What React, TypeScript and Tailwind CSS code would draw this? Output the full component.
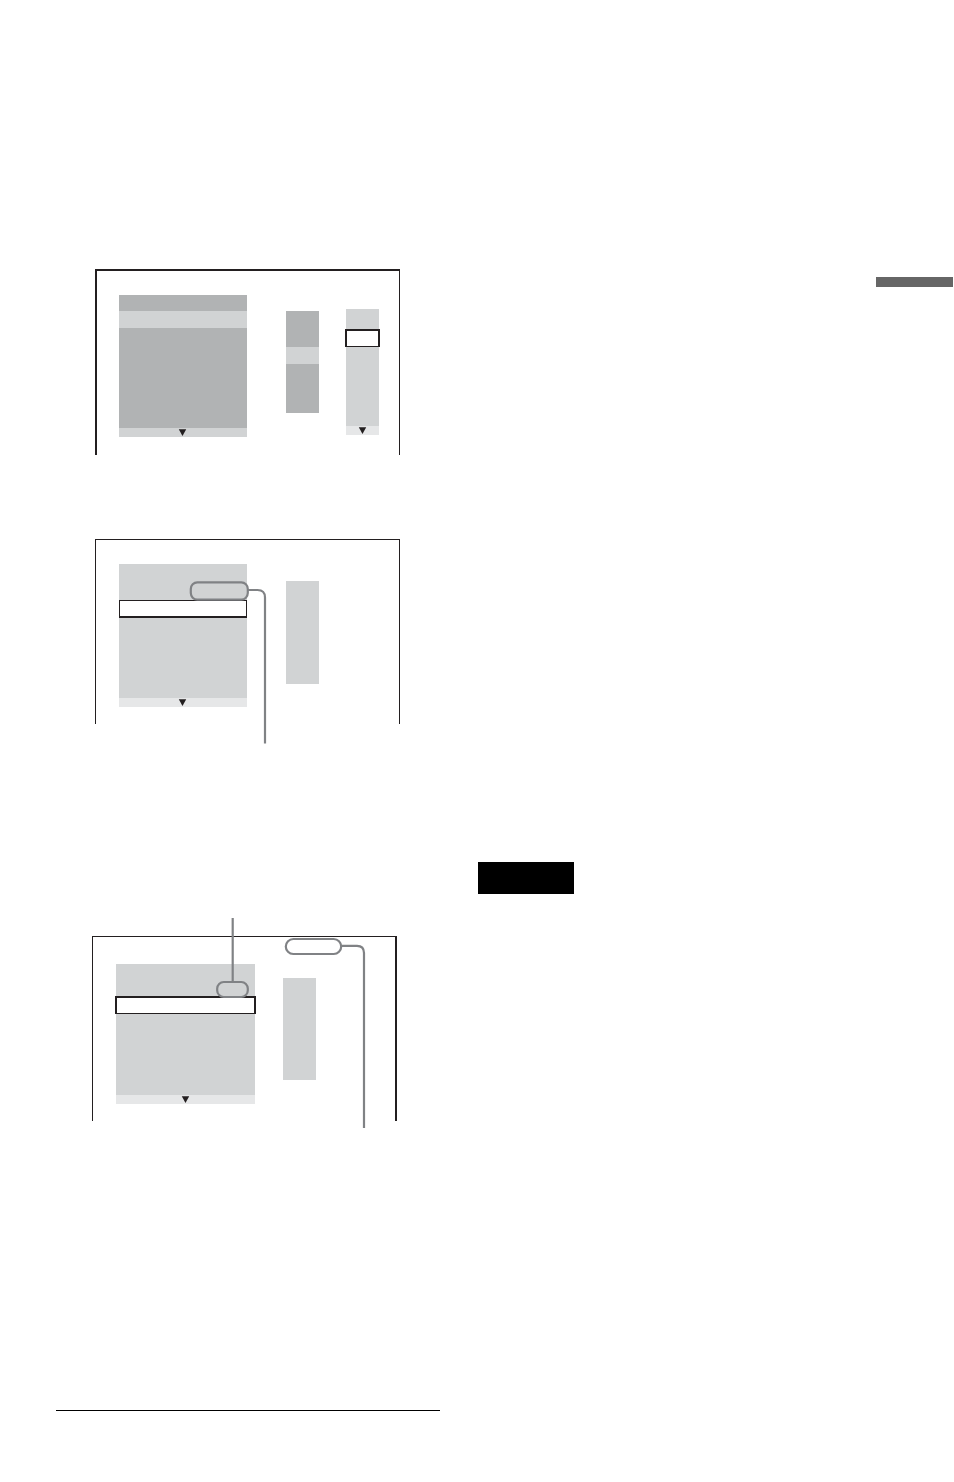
import type { ReactNode } from 'react';
import clsx from 'clsx';

interface RowProps {
  className: string;
}

const Row = ({ className }: RowProps) => {
  return <div className={className} />;
};

const ScrollFooter = ({ className }: { className: string }) => {
  return (
    <div className={clsx('flex h-[9px] items-center justify-center', className)}>
      <svg className="overflow-visible" width="7" height="7" viewBox="0 0 7 7" aria-hidden="true">
        <path d="M-0.2 0.3H7.2L3.5 7Z" fill="#231f20" />
      </svg>
    </div>
  );
};

const Screen = ({ className, children }: { className: string; children: ReactNode }) => {
  return (
    <figure className={clsx('relative flex w-[305px] items-start border-[#231f20]', className)}>
      {children}
    </figure>
  );
};

const SelectionScreen = () => {
  return (
    <Screen className="ml-[39px] border-t-2 border-r border-l-2 pt-6 pb-[18px] pl-[22px]">
      <div className="w-32">
        <Row className="h-4 bg-[#b1b3b4]" />
        <Row className="h-[17px] bg-[#d1d3d4]" />
        <Row className="h-[100px] bg-[#b1b3b4]" />
        <ScrollFooter className="bg-[#d1d3d4] pr-px" />
      </div>
      <div className="mt-4 ml-[39px] w-[33px]">
        <Row className="h-9 bg-[#b1b3b4]" />
        <Row className="h-[17px] bg-[#d1d3d4]" />
        <Row className="h-[49px] bg-[#b1b3b4]" />
      </div>
      <div className="mt-[14px] ml-[27px] w-[33px]">
        <Row className="h-5 bg-[#d1d3d4]" />
        <Row className="-mx-px h-[18px] border-2 border-b border-[#231f20] bg-white" />
        <Row className="h-[79px] bg-[#d1d3d4]" />
        <ScrollFooter className="bg-[#e6e7e8]" />
      </div>
    </Screen>
  );
};

const ListScreen = () => {
  return (
    <Screen className="mt-[84px] ml-[39px] border-x border-t pt-6 pb-[17px] pl-[23px]">
      <div className="w-32">
        <Row className="h-9 bg-[#d1d3d4]" />
        <Row className="h-[18px] border border-b-2 border-[#231f20] bg-white" />
        <Row className="h-20 bg-[#d1d3d4]" />
        <ScrollFooter className="bg-[#e6e7e8] pr-px" />
      </div>
      <Row className="mt-[17px] ml-[39px] h-[103px] w-[33px] bg-[#d1d3d4]" />
      <svg
        className="absolute top-10 left-[92px]"
        width="80"
        height="164"
        viewBox="0 0 80 164"
        fill="none"
        stroke="#808285"
        strokeWidth="2.2"
        aria-hidden="true"
      >
        <rect x="2.8" y="2.4" width="57" height="17.2" rx="6.5" />
        <path d="M60 10H69.5Q77 10 77 17.5V163.5" />
      </svg>
    </Screen>
  );
};

const DetailScreen = () => {
  return (
    <Screen className="mt-[212px] ml-9 border-t border-r-2 border-l pt-[27px] pb-[17px] pl-[23px]">
      <div className="w-[139px]">
        <Row className="h-8 bg-[#d1d3d4]" />
        <Row className="-mx-px h-[18px] border-2 border-b border-[#231f20] bg-white" />
        <Row className="h-[81px] bg-[#d1d3d4]" />
        <ScrollFooter className="bg-[#e6e7e8]" />
      </div>
      <Row className="mt-[14px] ml-7 h-[102px] w-[33px] bg-[#d1d3d4]" />
      <svg
        className="absolute -top-[19px] left-[121px]"
        width="154"
        height="210"
        viewBox="0 0 154 210"
        fill="none"
        stroke="#808285"
        strokeWidth="2.2"
        aria-hidden="true"
      >
        <path d="M18.7 0V64" />
        <rect x="3.2" y="64" width="30.6" height="15" rx="6.5" />
        <rect x="71.8" y="21" width="55.4" height="15" rx="7.5" />
        <path d="M127 27.8H143Q150 27.8 150 35V210" />
      </svg>
    </Screen>
  );
};

export default function App() {
  return (
    <main className="grid grid-cols-[384fr_476fr] gap-x-[38px] bg-white pb-[71px] pl-14">
      <div className="pt-[269px]">
        <SelectionScreen />
        <ListScreen />
        <DetailScreen />
        <hr className="mt-[289px] border-t border-black" />
      </div>

      <div className="flex flex-col pt-[277px]">
        <div className="mr-px h-[10px] w-[77px] self-end bg-[#666666]" />
        <div className="mt-[575px] h-8 w-24 bg-black" />
      </div>
    </main>
  );
}
